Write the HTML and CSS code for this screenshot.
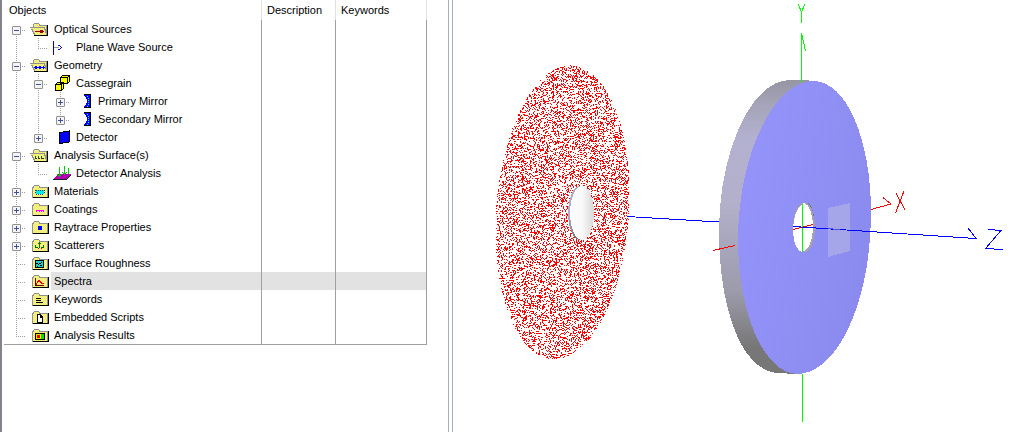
FILE: index.html
```html
<!DOCTYPE html>
<html lang="en">
<head>
<meta charset="utf-8">
<title>Optical Layout</title>
<link rel="stylesheet" href="styles.css">
</head>
<body>
<svg class="defs" aria-hidden="true">
  <defs>
    <pattern id="dither" width="2" height="2" patternUnits="userSpaceOnUse"><rect width="2" height="2" fill="#f8f040"/><path d="M0 0h1v1h-1zM1 1h1v1h-1z" fill="#f0eeb8"/></pattern>
    <symbol id="closed" viewBox="0 0 24 18">
      <path d="M5 5h1V4h1V3h5v1h1v1h8v11H5z" fill="#909090"/>
      <path d="M6 6h14v9H6zM7 4h5v2H7z" fill="url(#dither)"/>
      <path d="M6 16h16V5h-1v10H6z" fill="#000"/>
    </symbol>
    <symbol id="open" viewBox="0 0 24 18">
      <path d="M6 4h1V3h5v1h1v1h7v11H7z" fill="#909090"/>
      <path d="M7 4h5v2h7v3H7z" fill="url(#dither)"/>
      <path d="M3 7h15v2h1v3h1v4H7v-2H6v-2H5v-2H4V8H3z" fill="#909090"/>
      <path d="M4 8h13v2h1v3h1v2H8v-2H7v-2H6V9H4z" fill="url(#dither)"/>
      <path d="M7 16h14V5h-1v10H7z" fill="#000"/>
    </symbol>
    <symbol id="i-source" viewBox="0 0 24 18"><use href="#open"/><path d="M8 11h9v1h-9zM13 10h3v3h-3z" fill="#a00000"/></symbol>
    <symbol id="i-geometry" viewBox="0 0 24 18"><use href="#open"/><path d="M7 11h11v1h-11zM8 10h2v3h-2zM12 10h2v3h-2zM16 10h1v3h-1z" fill="#0000ff"/></symbol>
    <symbol id="i-surfaces" viewBox="0 0 24 18"><use href="#open"/><path d="M8 10h1v2h-1zM11 10h1v2h-1zM14 10h1v2h-1z" fill="#007000"/><path d="M8 12h2v1h-2zM11 12h2v1h-2zM14 12h3v1h-3z" fill="#333"/></symbol>
    <symbol id="i-plane" viewBox="0 0 24 18"><path d="M4 3h1v14h-1z" fill="#0000c8"/><path d="M5 9h5v1H5z" fill="#999"/><path d="M9 7h2v1H9zM11 8h1v1h-1zM12 9h1v1h-1zM11 10h1v1h-1zM9 11h2v1H9z" fill="#0000e0"/></symbol>
    <symbol id="i-assembly" viewBox="0 0 24 18"><path d="M11.500 3.500l2-2h7v6l-2 2h-7zM6.500 10.500l2-2h6v6l-2 2h-6z" fill="#ffff00" stroke="#000"/><path d="M11.500 3.500h7v6M18.500 3.500l2-2M6.500 10.500h6v6M12.500 10.500l2-2" fill="none" stroke="#000"/></symbol>
    <symbol id="i-mirror" viewBox="0 0 24 18"><path d="M13 3h6v12h-6v-1h1v-1h1v-2h1V7h-1V5h-1V4h-1z" fill="#0000ff"/><path d="M13 2h7v14h-7v-1h6V3h-6z" fill="#000"/><path d="M16 4h1v1h-1zM17 6h1v1h-1zM17 8h1v1h-1zM17 10h1v1h-1zM17 12h1v1h-1zM16 14h1v1h-1z" fill="#00ffff"/></symbol>
    <symbol id="i-detector" viewBox="0 0 24 18"><path d="M10.500 4.500l10-1.500v11l-10 1.500z" fill="#0000ff" stroke="#000"/></symbol>
    <symbol id="i-analysis" viewBox="0 0 24 18"><path d="M4 15h13l5-5H10z" fill="#b000b0"/><path d="M4 15h13l5-5v1l-5 5H4z" fill="#222"/><path d="M10 3h1v10h-1zM15 2h1v9h-1zM8 10h1v1H8zM9 11h3v1H9zM12 10h1v1h-1zM13 8h1v1h-1zM14 9h3v1h-3zM17 8h1v1h-1zM19 4h1v6h-1z" fill="#00c800"/></symbol>
    <symbol id="i-materials" viewBox="0 0 24 18"><use href="#closed"/><path d="M9 8h8v4h-8z" fill="#00e8f0"/><path d="M9 8.500h8M9 12.500h8M8.500 8v4M17.500 8v4" stroke="#055" stroke-dasharray="1 1"/></symbol>
    <symbol id="i-coatings" viewBox="0 0 24 18"><use href="#closed"/><path d="M9 10h8v1h-8zM9 11h1v1h-1zM12 11h1v1h-1zM14 11h1v1h-1zM16 11h1v1h-1z" fill="#ff00ff"/></symbol>
    <symbol id="i-raytrace" viewBox="0 0 24 18"><use href="#closed"/><path d="M11 8h4v4h-4z" fill="#0000ff"/></symbol>
    <symbol id="i-scatter" viewBox="0 0 24 18"><use href="#closed"/><path d="M12 6h1v6h-1zM11 7h3v1h-3zM8 9h1v3h-1zM9 11h2v1h-2zM16 9h1v3h-1zM14 11h2v1h-2z" fill="#007000"/><path d="M11 12h1v1h-1zM14 12h1v1h-1z" fill="#e00000"/></symbol>
    <symbol id="i-rough" viewBox="0 0 24 18"><use href="#closed"/><path d="M8 6h9v8H8z" fill="#000"/><path d="M9 7h7v6H9z" fill="#20d0d0"/><path d="M9 9h2v1h-2zM11 10h1v1h-1zM12 9h2v1h-2zM14 8h1v1h-1zM10 12h1v1h-1zM13 11h2v1h-2z" fill="#000"/></symbol>
    <symbol id="i-spectra" viewBox="0 0 24 18"><use href="#closed"/><path d="M8 6h1v8h-1zM8 13h9v1h-9z" fill="#600000"/><path d="M9 11h1v2H9zM10 9h1v2h-1zM11 8h2v2h-2zM13 9h1v2h-1zM14 10h1v2h-1zM15 11h2v1h-2z" fill="#f00000"/></symbol>
    <symbol id="i-keywords" viewBox="0 0 24 18"><use href="#closed"/><path d="M9 8h5v1h-5zM9 10h5v1h-5zM9 12h7v1h-7z" fill="#000"/></symbol>
    <symbol id="i-scripts" viewBox="0 0 24 18"><use href="#closed"/><path d="M10 6h4v1h1v1h1v7h-6z" fill="#000"/><path d="M11 7h2v3h2v4h-4z" fill="#fff"/></symbol>
    <symbol id="i-results" viewBox="0 0 24 18"><use href="#closed"/><path d="M8 7h10v7H8z" fill="#000"/><path d="M9 8h8v5H9z" fill="#00e000"/><path d="M9 8h5v5H9z" fill="#ffe000"/><path d="M10 9h3v3h-3z" fill="#f00000"/></symbol>
  </defs>
</svg>
<main class="app">
  <section class="tree-pane">
    <table class="tree">
      <thead><tr><th class="col-objects">Objects</th><th class="col-desc">Description</th><th class="col-keys">Keywords</th></tr></thead>
      <tbody>
        <tr><td><div class="node"><span class="g first"><button class="toggle" aria-label="Collapse Optical Sources"></button></span><svg class="icon"><use href="#i-source"/></svg><span class="label">Optical Sources</span></div></td><td></td><td></td></tr>
        <tr><td><div class="node"><span class="g line"></span><span class="g last"></span><svg class="icon"><use href="#i-plane"/></svg><span class="label">Plane Wave Source</span></div></td><td></td><td></td></tr>
        <tr><td><div class="node"><span class="g tee"><button class="toggle" aria-label="Collapse Geometry"></button></span><svg class="icon"><use href="#i-geometry"/></svg><span class="label">Geometry</span></div></td><td></td><td></td></tr>
        <tr><td><div class="node"><span class="g line"></span><span class="g tee"><button class="toggle" aria-label="Collapse Cassegrain"></button></span><svg class="icon"><use href="#i-assembly"/></svg><span class="label">Cassegrain</span></div></td><td></td><td></td></tr>
        <tr><td><div class="node"><span class="g line"></span><span class="g line"></span><span class="g tee"><button class="toggle plus" aria-label="Expand Primary Mirror"></button></span><svg class="icon"><use href="#i-mirror"/></svg><span class="label">Primary Mirror</span></div></td><td></td><td></td></tr>
        <tr><td><div class="node"><span class="g line"></span><span class="g line"></span><span class="g last"><button class="toggle plus" aria-label="Expand Secondary Mirror"></button></span><svg class="icon"><use href="#i-mirror"/></svg><span class="label">Secondary Mirror</span></div></td><td></td><td></td></tr>
        <tr><td><div class="node"><span class="g line"></span><span class="g last"><button class="toggle plus" aria-label="Expand Detector"></button></span><svg class="icon"><use href="#i-detector"/></svg><span class="label">Detector</span></div></td><td></td><td></td></tr>
        <tr><td><div class="node"><span class="g tee"><button class="toggle" aria-label="Collapse Analysis Surfaces"></button></span><svg class="icon"><use href="#i-surfaces"/></svg><span class="label">Analysis Surface(s)</span></div></td><td></td><td></td></tr>
        <tr><td><div class="node"><span class="g line"></span><span class="g last"></span><svg class="icon"><use href="#i-analysis"/></svg><span class="label">Detector Analysis</span></div></td><td></td><td></td></tr>
        <tr><td><div class="node"><span class="g tee"><button class="toggle plus" aria-label="Expand Materials"></button></span><svg class="icon"><use href="#i-materials"/></svg><span class="label">Materials</span></div></td><td></td><td></td></tr>
        <tr><td><div class="node"><span class="g tee"><button class="toggle plus" aria-label="Expand Coatings"></button></span><svg class="icon"><use href="#i-coatings"/></svg><span class="label">Coatings</span></div></td><td></td><td></td></tr>
        <tr><td><div class="node"><span class="g tee"><button class="toggle plus" aria-label="Expand Raytrace Properties"></button></span><svg class="icon"><use href="#i-raytrace"/></svg><span class="label">Raytrace Properties</span></div></td><td></td><td></td></tr>
        <tr><td><div class="node"><span class="g tee"><button class="toggle plus" aria-label="Expand Scatterers"></button></span><svg class="icon"><use href="#i-scatter"/></svg><span class="label">Scatterers</span></div></td><td></td><td></td></tr>
        <tr><td><div class="node"><span class="g tee"></span><svg class="icon"><use href="#i-rough"/></svg><span class="label">Surface Roughness</span></div></td><td></td><td></td></tr>
        <tr class="selected"><td><div class="node"><span class="g tee"></span><svg class="icon"><use href="#i-spectra"/></svg><span class="label">Spectra</span></div></td><td></td><td></td></tr>
        <tr><td><div class="node"><span class="g tee"></span><svg class="icon"><use href="#i-keywords"/></svg><span class="label">Keywords</span></div></td><td></td><td></td></tr>
        <tr><td><div class="node"><span class="g tee"></span><svg class="icon"><use href="#i-scripts"/></svg><span class="label">Embedded Scripts</span></div></td><td></td><td></td></tr>
        <tr><td><div class="node"><span class="g last"></span><svg class="icon"><use href="#i-results"/></svg><span class="label">Analysis Results</span></div></td><td></td><td></td></tr>
      </tbody>
    </table>
  </section>
  <div class="splitter"></div>
  <section class="view-pane">
    <svg class="scene" viewBox="453 0 565 432" preserveAspectRatio="xMidYMin meet" shape-rendering="crispEdges" role="img" aria-label="3D view of the telescope layout">
      <defs>
        <linearGradient id="rim" x1="0" y1="80" x2="0" y2="374" gradientUnits="userSpaceOnUse"><stop offset="0" stop-color="#9695a4"/><stop offset=".07" stop-color="#a3a2b5"/><stop offset=".2" stop-color="#b3b1d0"/><stop offset=".42" stop-color="#b2b0ca"/><stop offset=".72" stop-color="#9c9bab"/><stop offset=".91" stop-color="#777777"/><stop offset="1" stop-color="#777777"/></linearGradient>
        <linearGradient id="face" x1="738" y1="200" x2="871" y2="230" gradientUnits="userSpaceOnUse"><stop offset="0" stop-color="#9393fa"/><stop offset="1" stop-color="#8b8bef"/></linearGradient>
        <linearGradient id="small" x1="568" y1="0" x2="594" y2="0" gradientUnits="userSpaceOnUse"><stop offset="0" stop-color="#ffffff"/><stop offset=".55" stop-color="#f8f8f8"/><stop offset="1" stop-color="#d8d8d8"/></linearGradient>
        <linearGradient id="smallrim" x1="0" y1="186" x2="0" y2="240" gradientUnits="userSpaceOnUse"><stop offset="0" stop-color="#a9a8c0"/><stop offset=".5" stop-color="#b2b0d0"/><stop offset="1" stop-color="#777777"/></linearGradient>
      </defs>
      <path id="rays" fill="#ff0000"/>
      <ellipse cx="580" cy="213" rx="12" ry="27" fill="url(#smallrim)"/>
      <ellipse cx="582" cy="213" rx="12" ry="27" fill="url(#small)"/>
      <path d="M627 216.500L719 222" stroke="#0000ff"/>
      <path fill="url(#rim)" d="M790 80H809V372L797 374L777 373C738 370 719 300 719 232C719 150 752 80 790 80z"/>
      <path fill="url(#face)" d="M813 81C847 81 871 140 871 213C871 300 838 374 797 374C764 374 738 312 738 240C738 155 774 81 813 81z"/>
      <ellipse cx="804" cy="227.500" rx="11" ry="25" fill="#a3a2b2"/>
      <path d="M807 203q4 0 6 9l1 8q0-12-7-17z" fill="#777"/>
      <path fill="#fff" d="M804 203C797 206 793 217 793 230C793 243 797 251 802 252C809 251 813 239 813 225C813 215 809 204 804 203z"/>
      <path d="M828 208L850 203V251L828 257z" fill="#a5a5ea"/>
      <g fill="none" stroke="#ff0000"><path d="M713 250.500L735 245.500M793 229.500L813 224.500M871 209.500L891 204M883 197.500L891 204M895.500 213L904 191M896 193L905 210"/></g>
      <g fill="none" stroke="#00ff00"><path d="M801.500 33V82M801.500 33L805.500 51M798 4L801.500 12L805 4M801.500 12V23M802.500 204V252M802.500 374V422"/></g>
      <path d="M793 226.500L976 238.500L968 228M988 229.500L1001 230.500L985.500 248.500L1003 249.500" fill="none" stroke="#0000ff"/>
      <path d="M828 228.700L840 229.500" stroke="#5050ea"/>
    </svg>
  </section>
</main>
<script src="rays.js"></script>
</body>
</html>
```
FILE: styles.css
```css
* { box-sizing: border-box; }
body { margin: 0; background: #fff; color: #000; font: 11px/18px "Liberation Sans", Arial, sans-serif; }
.defs { position: absolute; width: 0; height: 0; }
.app { display: flex; min-height: 100vh; }
.tree-pane { flex: 0 0 448px; border-left: 2px solid #83838b; padding-left: 2px; }
.tree { width: 423px; border-collapse: separate; border-spacing: 0; table-layout: fixed; border-bottom: 1px solid #a0a0a0; }
.tree th { height: 20px; padding: 0 0 0 5px; text-align: left; font-weight: normal; line-height: 20px; border-right: 1px solid #e0e0e0; }
.col-objects { width: 258px; }
.col-desc { width: 74px; }
.tree td { height: 18px; padding: 0; border-right: 1px solid #a0a0a0; }
.node { display: flex; height: 18px; padding-left: 1px; }
.g { flex: 0 0 22px; padding: 6px 0 0 7px; background-repeat: no-repeat;
  --v: repeating-linear-gradient(to bottom, #a0a0a0 0 1px, transparent 1px 2px);
  --h: repeating-linear-gradient(to right, #a0a0a0 0 1px, transparent 1px 2px); }
.line { background-image: var(--v); background-position: 11px 0; background-size: 1px 18px; }
.tee { background-image: var(--v), var(--h); background-position: 11px 0, 11px 10px; background-size: 1px 18px, 9px 1px; }
.last { background-image: var(--v), var(--h); background-position: 11px 0, 11px 10px; background-size: 1px 10px, 9px 1px; }
.first { background-image: var(--v), var(--h); background-position: 11px 10px, 11px 10px; background-size: 1px 8px, 9px 1px; }
.toggle { display: block; width: 9px; height: 9px; padding: 0; border: 1px solid #919191; border-radius: 1px;
  background: linear-gradient(#3c50a0, #3c50a0) center / 5px 1px no-repeat, #f4f4f4; }
.toggle.plus { background: linear-gradient(#3c50a0, #3c50a0) center / 5px 1px no-repeat, linear-gradient(#3c50a0, #3c50a0) center / 1px 5px no-repeat, #f4f4f4; }
.icon { flex: 0 0 24px; height: 18px; shape-rendering: crispEdges; }
.label { flex: 1; padding-left: 3px; white-space: nowrap; }
.selected .label, .selected td + td { background: #e2e2e2; }
.splitter { flex: 0 0 5px; border: 1px solid #a7adb9; border-width: 0 1px; }
.view-pane { flex: 1; min-width: 0; }
.scene { display: block; width: 100%; height: auto; }
```
FILE: rays.js
```js
// Scatter ray hits as single dots over the tilted aperture disk.
let seed = 20117;
function random() {
  seed = (seed * 1664525 + 1013904223) % 4294967296;
  return seed / 4294967296;
}
let d = "";
for (let y = 65; y < 360; y++) {
  for (let x = 494; x < 631; x++) {
    const v = (y - 212) / 147;
    const u = (x - 562 + 8 * v) / 66.5;
    if (u * u + v * v <= 1 && random() < 0.32) d += `M${x} ${y}h1v1h-1z`;
  }
}
document.getElementById("rays").setAttribute("d", d);
```
